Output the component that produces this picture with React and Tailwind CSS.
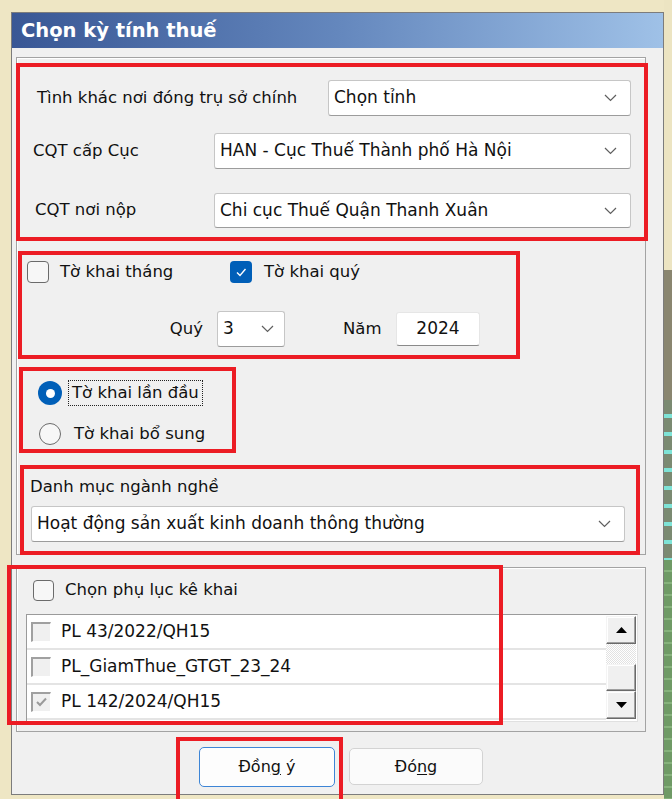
import React from 'react';

const font = "font-['DejaVu_Sans',sans-serif]";

function Chevron() {
  return (
    <svg width="13" height="8" viewBox="0 0 13 8" className="shrink-0">
      <polyline points="1,1 6.5,6.5 12,1" fill="none" stroke="#5f5f5f" strokeWidth="1.2" />
    </svg>
  );
}

function Combo({ value, className = '' }) {
  return (
    <div className={`flex items-center justify-between bg-white border border-[#c6c6c6] border-b-[#9c9c9c] rounded-[3px] pl-[5px] pr-[13px] text-[17px] text-[#111] ${className}`}>
      <span className="truncate">{value}</span>
      <Chevron />
    </div>
  );
}

function CheckBox({ checked, size = 'w-[22px] h-[22px]' }) {
  if (checked) {
    return (
      <div className={`${size} shrink-0 rounded-[4px] bg-[#005fb8] flex items-center justify-center`}>
        <svg width="14" height="14" viewBox="0 0 14 14">
          <polyline points="3,7.5 6,10.5 11.5,4" fill="none" stroke="#fff" strokeWidth="1.4" />
        </svg>
      </div>
    );
  }
  return <div className={`${size} shrink-0 rounded-[4px] border border-[#6b6b6b] bg-[#f7f7f7]`} />;
}

function ClassicCheck({ checked }) {
  return (
    <div className="w-[20px] h-[20px] shrink-0 border-t-2 border-l-2 border-t-[#a0a0a0] border-l-[#a0a0a0] border-r border-b border-r-[#fff] border-b-[#fff] bg-[#f0f0f0] flex items-center justify-center">
      {checked && (
        <svg width="13" height="12" viewBox="0 0 13 12">
          <polyline points="2,6 5,9 11,2.5" fill="none" stroke="#9a9a9a" strokeWidth="2" />
        </svg>
      )}
    </div>
  );
}

function ScrollBtn({ up }) {
  return (
    <div className="h-[28px] flex items-center justify-center bg-[#f0f0f0] border border-t-[#f4f4f4] border-l-[#f4f4f4] border-r-[#6a6a6a] border-b-[#6a6a6a] shadow-[inset_-1px_-1px_0_#a0a0a0,inset_1px_1px_0_#fff]">
      <svg width="11" height="6" viewBox="0 0 11 6">
        {up ? <polygon points="0,6 11,6 5.5,0" fill="#000" /> : <polygon points="0,0 11,0 5.5,6" fill="#000" />}
      </svg>
    </div>
  );
}

export default function App() {
  const items = [
    { label: 'PL 43/2022/QH15', checked: false },
    { label: 'PL_GiamThue_GTGT_23_24', checked: false },
    { label: 'PL 142/2024/QH15', checked: true },
  ];

  return (
    <div className={`relative flex w-[672px] h-[799px] overflow-hidden bg-[#eee6c4] ${font} text-[#111]`}>
      <div className="w-[11px] shrink-0" />

      <div className="flex flex-col w-[653px] shrink-0">
        <div className="h-[12px] shrink-0" />
        <div className="h-[783px] shrink-0 border border-[#7c7c7c] bg-[#f0f0f0] flex flex-col">
          <div className="h-[35px] shrink-0 bg-linear-to-r from-[#395795] via-[#6487bd] to-[#9fc1e7] pl-[9px] flex items-center text-white font-bold text-[19.5px]">
            Chọn kỳ tính thuế
          </div>

          <div className="px-[4px] pt-[9px] flex flex-col">
            {/* group 1 */}
            <div className="w-[630px] h-[498px] border border-[#a3a3a3] shadow-[inset_1px_1px_0_#fff] flex flex-col text-[16.5px]">
              <div className="mt-[22px] h-[36px] flex items-center">
                <div className="w-[311px] pl-[20px]">Tình khác nơi đóng trụ sở chính</div>
                <Combo value="Chọn tỉnh" className="w-[303px] h-full" />
              </div>
              <div className="mt-[17px] h-[36px] flex items-center">
                <div className="w-[197px] pl-[16px]">CQT cấp Cục</div>
                <Combo value="HAN - Cục Thuế Thành phố Hà Nội" className="w-[417px] h-full" />
              </div>
              <div className="mt-[24px] h-[35px] flex items-center">
                <div className="w-[197px] pl-[18px]">CQT nơi nộp</div>
                <Combo value="Chi cục Thuế Quận Thanh Xuân" className="w-[417px] h-full" />
              </div>

              <div className="mt-[33px] h-[22px] flex items-center">
                <div className="w-[213px] pl-[10px] flex items-center gap-[11px]">
                  <CheckBox checked={false} />
                  <span>Tờ khai tháng</span>
                </div>
                <div className="flex items-center gap-[12px]">
                  <CheckBox checked />
                  <span>Tờ khai quý</span>
                </div>
              </div>

              <div className="mt-[28px] h-[36px] flex items-center">
                <div className="w-[200px] text-right pr-[14px]">Quý</div>
                <Combo value="3" className="w-[68px] h-full !pr-[10px]" />
                <div className="w-[111px] pl-[58px]">Năm</div>
                <div className="w-[84px] h-[34px] bg-white rounded-[3px] border border-[#e6e6e6] border-b-[#8a8a8a] flex items-center justify-center text-[17px]">
                  2024
                </div>
              </div>

              <div className="mt-[33px] h-[26px] flex items-center pl-[21px]">
                <div className="w-[24px] h-[24px] rounded-full bg-[#005fb8] flex items-center justify-center shrink-0">
                  <div className="w-[9px] h-[9px] rounded-full bg-white" />
                </div>
                <div className="ml-[6px] h-full px-[3px] border border-dotted border-[#222] flex items-center">Tờ khai lần đầu</div>
              </div>
              <div className="mt-[15px] h-[26px] flex items-center pl-[22px]">
                <div className="w-[22px] h-[22px] rounded-full border border-[#6b6b6b] bg-[#f7f7f7] shrink-0" />
                <span className="ml-[13px]">Tờ khai bổ sung</span>
              </div>

              <div className="mt-[30px] h-[20px] flex items-center pl-[13px]">Danh mục ngành nghề</div>
              <Combo value="Hoạt động sản xuất kinh doanh thông thường" className="mt-[9px] ml-[14px] w-[594px] h-[36px]" />
            </div>

            {/* group 2 */}
            <div className="mt-[12px] w-[630px] h-[165px] border border-[#a3a3a3] shadow-[inset_1px_1px_0_#fff] flex flex-col text-[16.5px]">
              <div className="mt-[11px] h-[22px] flex items-center pl-[16px] gap-[11px]">
                <CheckBox checked={false} size="w-[21px] h-[21px]" />
                <span>Chọn phụ lục kê khai</span>
              </div>
              <div className="mt-[13px] ml-[9px] w-[612px] h-[108px] bg-white border border-t-[#9a9a9a] border-l-[#9a9a9a] border-r-[#e0e0e0] border-b-[#e0e0e0] flex">
                <div className="flex-1 flex flex-col">
                  {items.map((it) => (
                    <div key={it.label} className="h-[35px] border-b-2 border-[#e4e4e4] flex items-center pl-[4px] gap-[10px] text-[17px]">
                      <ClassicCheck checked={it.checked} />
                      <span>{it.label}</span>
                    </div>
                  ))}
                </div>
                <div className="w-[30px] flex flex-col py-[1px] mr-[1px]">
                  <ScrollBtn up />
                  <div className="h-[20px] bg-[repeating-conic-gradient(#ffffff_0_25%,#e2e2e2_0_50%)] bg-size-[2px_2px]" />
                  <div className="h-[27px] bg-[#f0f0f0] border border-t-[#f4f4f4] border-l-[#f4f4f4] border-r-[#6a6a6a] border-b-[#6a6a6a] shadow-[inset_-1px_-1px_0_#a0a0a0,inset_1px_1px_0_#fff]" />
                  <ScrollBtn />
                </div>
              </div>
            </div>

            {/* buttons */}
            <div className="mt-[15px] pl-[183px] flex items-start gap-[14px] text-[16px]">
              <div className="w-[136px] h-[40px] rounded-[5px] border border-[#3d85d6] bg-[#fdfdfd] flex items-center justify-center">
                <span>
                  Đồn<span className="underline underline-offset-2">g</span> ý
                </span>
              </div>
              <div className="mt-[1px] w-[134px] h-[37px] rounded-[5px] border border-[#d3d3d3] bg-[#fbfbfb] flex items-center justify-center">
                <span>
                  Đó<span className="underline underline-offset-2">n</span>g
                </span>
              </div>
            </div>
          </div>
        </div>
      </div>

      <div className="w-[8px] shrink-0 flex flex-col">
        <div className="h-[270px] bg-[#ece4c2]" />
        <div className="h-[130px] bg-[#8a8670]" />
        <div className="h-[160px] bg-[repeating-linear-gradient(to_bottom,#7b8a72_0_14px,#7ee3d6_14px_18px)]" />
        <div className="flex-1 bg-[repeating-linear-gradient(to_bottom,#6f9a66_0_10px,#86b27c_10px_12px)]" />
      </div>

      {/* annotation boxes */}
      <div className="absolute left-[16px] top-[63px] w-[632px] h-[178px] border-4 border-[#ec1c24] pointer-events-none" />
      <div className="absolute left-[18px] top-[251px] w-[502px] h-[108px] border-4 border-[#ec1c24] pointer-events-none" />
      <div className="absolute left-[19px] top-[367px] w-[217px] h-[86px] border-4 border-[#ec1c24] pointer-events-none" />
      <div className="absolute left-[20px] top-[465px] w-[620px] h-[90px] border-4 border-[#ec1c24] pointer-events-none" />
      <div className="absolute left-[7px] top-[565px] w-[496px] h-[160px] border-4 border-[#ec1c24] pointer-events-none" />
      <div className="absolute left-[176px] top-[737px] w-[167px] h-[70px] border-4 border-[#ec1c24] pointer-events-none" />
    </div>
  );
}
